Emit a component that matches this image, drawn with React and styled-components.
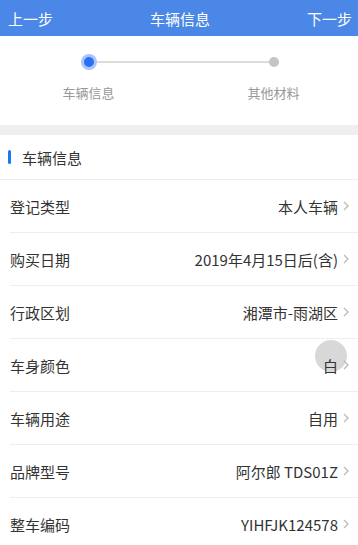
import React from "react";
import styled, {createGlobalStyle} from "styled-components";

const GlobalStyle = createGlobalStyle`
  html, body {
    margin: 0;
    padding: 0;
    background: #fff;
  }
  body {
    font-family: "Noto Sans CJK SC", "Liberation Sans", sans-serif;
    -webkit-font-smoothing: antialiased;
  }
`;

const Page = styled.div`
  width: 358px;
  height: 545px;
  overflow: hidden;
  background: #fff;
`;

const NavBar = styled.div`
  height: 36px;
  background: #4a87e6;
  color: #fff;
  display: flex;
  align-items: center;
  justify-content: space-between;
  padding: 0 6px 0 8px;
  font-size: 15px;
`;

const NavTitle = styled.div`
  font-size: 15px;
`;

const NavAction = styled.div`
  min-width: 46px;
  text-align: ${({right}) => (right ? "right" : "left")};
`;

const Stepper = styled.div`
  height: 89px;
  display: grid;
  grid-template-columns: 1fr 1fr;
  position: relative;
`;

const StepLine = styled.div`
  position: absolute;
  top: 25px;
  left: 88px;
  width: 185px;
  height: 2px;
  background: #dcdcdc;
`;

const Step = styled.div`
  display: flex;
  flex-direction: column;
  align-items: center;
  padding-top: 18px;
  position: relative;
  left: ${({shift}) => shift}px;
`;

const Dot = styled.div`
  width: 10px;
  height: 10px;
  border-radius: 50%;
  background: ${({active}) => (active ? "#2e6ff2" : "#c4c4c4")};
  box-shadow: ${({active}) => (active ? "0 0 0 3px #a9c6fa" : "none")};
  margin-top: 3px;
`;

const StepLabel = styled.div`
  margin-top: 16px;
  font-size: 13px;
  color: #999;
`;

const Gap = styled.div`
  height: 10px;
  background: #efefef;
`;

const SectionHead = styled.div`
  height: 44px;
  border-bottom: 1px solid #eeeeee;
  display: flex;
  align-items: center;
  padding-left: 8px;
  font-size: 15px;
  color: #333;
`;

const SectionBar = styled.span`
  width: 3px;
  height: 14px;
  border-radius: 2px;
  background: #1a78f5;
  margin-right: 11px;
`;

const Row = styled.div`
  height: 52px;
  margin-left: 10px;
  padding-right: 9px;
  border-bottom: 1px solid #eeeeee;
  display: flex;
  align-items: center;
  justify-content: space-between;
  font-size: 15px;
  color: #333;
  position: relative;
`;

const Value = styled.div`
  display: flex;
  align-items: center;
  gap: 5px;
  position: relative;
  z-index: 1;
`;

const Touch = styled.div`
  position: absolute;
  right: 11px;
  top: 1px;
  width: 32px;
  height: 32px;
  border-radius: 50%;
  background: rgba(190, 190, 190, 0.6);
  z-index: 0;
`;

const Chevron = () => (
  <svg width="6" height="10" viewBox="0 0 6 10">
    <path d="M1 1l4 4-4 4" fill="none" stroke="#bdbdbd" strokeWidth="1.4" />
  </svg>
);

const rows = [
  ["登记类型", "本人车辆"],
  ["购买日期", "2019年4月15日后(含)"],
  ["行政区划", "湘潭市-雨湖区"],
  ["车身颜色", "白", true],
  ["车辆用途", "自用"],
  ["品牌型号", "阿尔郎 TDS01Z"],
  ["整车编码", "YIHFJK124578"],
];

export default function App() {
  return (
    <Page>
      <GlobalStyle />
      <NavBar>
        <NavAction>上一步</NavAction>
        <NavTitle>车辆信息</NavTitle>
        <NavAction right>下一步</NavAction>
      </NavBar>
      <Stepper>
        <StepLine />
        <Step shift={-1}>
          <Dot active />
          <StepLabel>车辆信息</StepLabel>
        </Step>
        <Step shift={5}>
          <Dot />
          <StepLabel>其他材料</StepLabel>
        </Step>
      </Stepper>
      <Gap />
      <SectionHead>
        <SectionBar />
        车辆信息
      </SectionHead>
      {rows.map(([label, value, touched]) => (
        <Row key={label}>
          <span>{label}</span>
          {touched && <Touch />}
          <Value>
            {value}
            <Chevron />
          </Value>
        </Row>
      ))}
    </Page>
  );
}
